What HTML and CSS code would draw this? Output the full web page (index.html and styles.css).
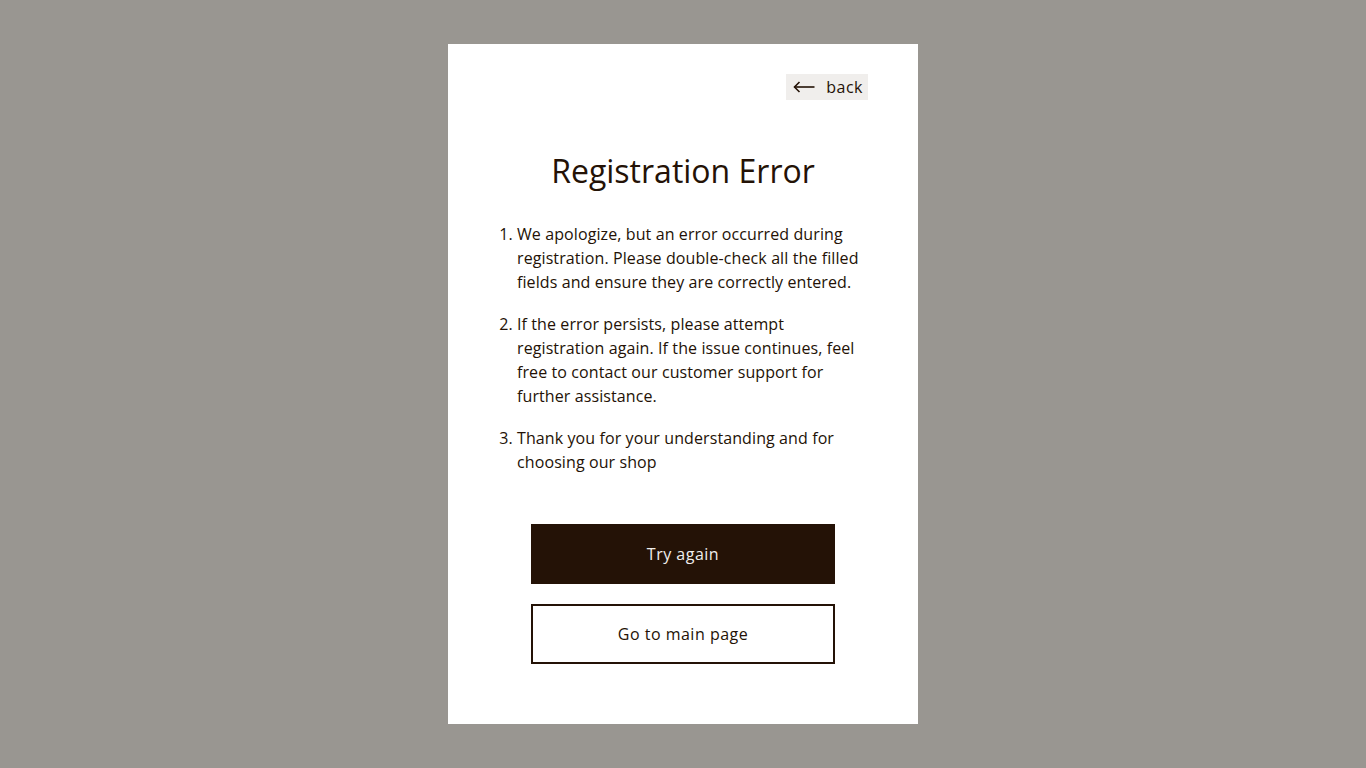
FILE: index.html
```html
<!DOCTYPE html>
<html lang="en">
<head>
  <meta charset="UTF-8">
  <meta name="viewport" content="width=device-width, initial-scale=1.0">
  <title>Registration Error</title>
  <link rel="stylesheet" href="styles.css">
</head>
<body>
  <!-- Error card -->
  <div class="card">
    <div class="card-top">
      <button class="back-btn">
        <svg width="22" height="12" viewBox="0 0 22 12" fill="none" stroke="currentColor" stroke-width="1.6">
          <path d="M21.5 6H1.5"/>
          <path d="M6.5 1L1.5 6l5 5"/>
        </svg>
        <span>back</span>
      </button>
    </div>

    <h1 class="title">Registration Error</h1>

    <ol class="error-list">
      <li>We apologize, but an error occurred during registration. Please double-check all the filled fields and ensure they are correctly entered.</li>
      <li>If the error persists, please attempt registration again. If the issue continues, feel free to contact our customer support for further assistance.</li>
      <li>Thank you for your understanding and for choosing our shop</li>
    </ol>

    <div class="actions">
      <button class="btn btn-primary">Try again</button>
      <button class="btn btn-outline">Go to main page</button>
    </div>
  </div>
</body>
</html>
```

FILE: styles.css
```css
/* General styling */
body {
  margin: 0;
  font-family: "Open Sans", sans-serif;
  background-color: #999691;
  color: #241206;
  min-height: 100vh;
  display: flex;
  justify-content: center;
  align-items: flex-start;
}

/* Card */
.card {
  width: 470px;
  margin-top: 44px;
  box-sizing: border-box;
  padding: 30px 50px 60px;
  background-color: #fff;
}

.card-top {
  display: flex;
  justify-content: flex-end;
}

.back-btn {
  display: flex;
  align-items: center;
  gap: 11px;
  height: 26px;
  padding: 0 5px 0 7px;
  border: none;
  background-color: #f0eeec;
  color: #241206;
  font-family: inherit;
  font-size: 16px;
  letter-spacing: 0.5px;
  cursor: pointer;
}

.title {
  margin: 49px 0 29px;
  font-size: 32px;
  font-weight: 400;
  line-height: 44px;
  text-align: center;
}

/* List */
.error-list {
  margin: 0;
  padding-left: 19px;
  font-size: 16px;
  line-height: 24px;
  letter-spacing: 0.1px;
}

.error-list li + li {
  margin-top: 18px;
}

/* Buttons */
.actions {
  display: flex;
  flex-direction: column;
  align-items: center;
  gap: 20px;
  margin-top: 50px;
}

.btn {
  width: 304px;
  height: 60px;
  font-family: inherit;
  font-size: 16px;
  letter-spacing: 0.5px;
  cursor: pointer;
}

.btn-primary {
  border: none;
  background-color: #241206;
  color: #f0eeec;
}

.btn-outline {
  border: 2px solid #241206;
  background-color: #fff;
  color: #241206;
}
```
